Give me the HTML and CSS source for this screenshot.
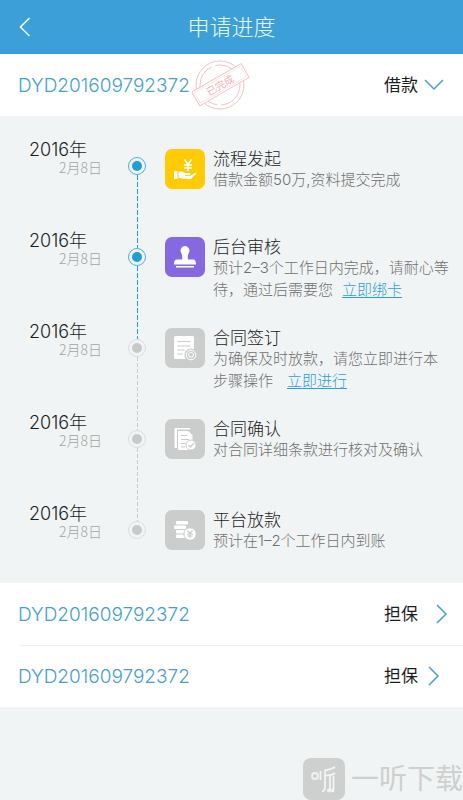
FILE: index.html
```html
<!DOCTYPE html>
<html lang="zh-CN">
<head>
<meta charset="utf-8">
<meta name="viewport" content="width=device-width, initial-scale=1">
<title>申请进度</title>
<link rel="stylesheet" href="styles.css">
</head>
<body>
<header class="topbar">
  <button class="back" type="button" aria-label="返回">
    <svg width="12" height="20" viewBox="0 0 12 20"><path d="M10.500 1 1.500 10l9 9"/></svg>
  </button>
  <h1 class="topbar-title">申请进度</h1>
</header>

<main>
  <button class="order" type="button" aria-expanded="true">
    <span class="order-no">DYD201609792372</span>
    <svg class="stamp" width="58" height="52" viewBox="0 0 58 52">
      <circle cx="28" cy="26" r="24"/>
      <circle cx="28" cy="26" r="20" stroke-dasharray="30 4 18 3"/>
      <g transform="rotate(-30 28 26)">
        <rect class="stamp-band" x="0" y="18" width="57" height="16"/>
        <rect x="2" y="20" width="53" height="12" stroke-width=".4"/>
        <text x="28" y="30" text-anchor="middle">已完成</text>
      </g>
    </svg>
    <span class="order-type">借款</span>
    <svg class="chevron" width="30" height="20" viewBox="0 0 30 20"><path d="m7 5 9 9 9-9"/></svg>
  </button>

  <ol class="timeline">
    <li class="step done">
      <div class="when"><span class="year">2016年</span><span class="day">2月8日</span></div>
      <div class="marker"><span class="dot"></span></div>
      <div class="body">
        <svg class="icon icon-yellow" width="40" height="40" viewBox="0 0 40 40">
          <path d="M9 22h3.500v8H9zM13.500 23c3-1.200 5-.5 7 1h4c1.500 0 1.500 1.800 0 2h-4.500v.8h5.500l4-2.600c1.500-.8 2.200.4 1.200 1.400L27 29c-1 .8-2 1.200-3 1.200L13.500 29z"/>
          <path class="stroke" stroke-width="1.600" d="m19.500 10.500 3.500 5 3.500-5M19 16h8M19 19h8M23 15.500V22"/>
        </svg>
        <div class="text"><h2>流程发起</h2><p>借款金额50万,资料提交完成</p></div>
      </div>
    </li>
    <li class="step done">
      <div class="when"><span class="year">2016年</span><span class="day">2月8日</span></div>
      <div class="marker"><span class="dot"></span></div>
      <div class="body">
        <svg class="icon icon-purple" width="40" height="40" viewBox="0 0 40 40">
          <path d="M20 9a4.500 4.500 0 0 1 4 6.500c-1.200 2-1.500 5-1 7h5c2.500 0 3 2 3 5H9c0-3 .5-5 3-5h5c.5-2 .2-5-1-7A4.500 4.500 0 0 1 20 9zM11 29h18v1.500H11z"/>
        </svg>
        <div class="text"><h2>后台审核</h2><p>预计2–3个工作日内完成，请耐心等待，通过后需要您<a href="#bind">立即绑卡</a></p></div>
      </div>
    </li>
    <li class="step">
      <div class="when"><span class="year">2016年</span><span class="day">2月8日</span></div>
      <div class="marker"><span class="dot"></span></div>
      <div class="body">
        <svg class="icon" width="40" height="40" viewBox="0 0 40 40">
          <rect x="9" y="8" width="20" height="23" rx="1.500"/>
          <path class="cut" d="M12.500 13.500h13M12.500 18h13M12.500 22h7M12.500 26h5"/>
          <circle class="cut solid" cx="26" cy="27" r="6"/>
          <circle class="stroke" cx="26" cy="27" r="4.800"/>
          <path class="stroke" d="m26 24 2.600 1.800-1 3.200h-3.200l-1-3.200z"/>
        </svg>
        <div class="text"><h2>合同签订</h2><p>为确保及时放款，请您立即进行本步骤操作<a class="wide" href="#sign">立即进行</a></p></div>
      </div>
    </li>
    <li class="step">
      <div class="when"><span class="year">2016年</span><span class="day">2月8日</span></div>
      <div class="marker"><span class="dot"></span></div>
      <div class="body">
        <svg class="icon" width="40" height="40" viewBox="0 0 40 40">
          <path d="M10 9h15v1.500H12V29h-1c-1 0-1.500-.5-1.500-1.500v-17z"/>
          <path d="M13 12h10l4.500 4v15H14.500c-1 0-1.500-.5-1.500-1.500z"/>
          <path class="cut" d="M16 16.500h6M16 20.500h8M16 24.500h5M16 28h4"/>
          <circle class="cut-line" cx="26" cy="26" r="5"/>
          <path class="cut" d="m23.500 26 2 2 3.500-4"/>
        </svg>
        <div class="text"><h2>合同确认</h2><p>对合同详细条款进行核对及确认</p></div>
      </div>
    </li>
    <li class="step">
      <div class="when"><span class="year">2016年</span><span class="day">2月8日</span></div>
      <div class="marker"><span class="dot"></span></div>
      <div class="body">
        <svg class="icon" width="40" height="40" viewBox="0 0 40 40">
          <rect x="11" y="11" width="12" height="3.400" rx="1"/>
          <rect x="9" y="15.500" width="12" height="3.400" rx="1"/>
          <rect x="11" y="20" width="12" height="3.400" rx="1"/>
          <rect x="11" y="24.500" width="12" height="3.400" rx="1"/>
          <circle class="cut-line" cx="25" cy="24" r="6.200"/>
          <path class="cut" d="m22.500 20.500 2.500 3 2.500-3M22 24h6M22 26h6M25 24v4"/>
        </svg>
        <div class="text"><h2>平台放款</h2><p>预计在1–2个工作日内到账</p></div>
      </div>
    </li>
  </ol>

  <button class="order" type="button">
    <span class="order-no">DYD201609792372</span>
    <span class="order-type">担保</span>
    <svg class="chevron" width="30" height="20" viewBox="0 0 30 20"><path d="m19 1 9 9-9 9"/></svg>
  </button>
  <button class="order divided" type="button">
    <span class="order-no">DYD201609792372</span>
    <span class="order-type">担保</span>
    <svg class="chevron" width="30" height="20" viewBox="0 0 30 20"><path d="m11 1 9 9-9 9"/></svg>
  </button>
</main>

<footer class="brand">
  <svg width="42" height="42" viewBox="0 0 42 42">
    <rect width="42" height="42" rx="8"/>
    <g class="brand-mark">
      <circle cx="12" cy="18" r="3"/>
      <path d="M17.500 13v9M32 9c-3 2-6 3-10 3.500v16c0 3-1 4.500-3 5M22 18c4-1.500 7 0 10-3M27 18v13.500M30.500 18v13.500"/>
      <circle cx="26" cy="32.500" r="1"/><circle cx="29.500" cy="32.500" r="1"/>
    </g>
  </svg>
  <span>一听下载</span>
</footer>
</body>
</html>
```
FILE: styles.css
```css
* { box-sizing: border-box; }

body {
  margin: 0;
  min-height: 100vh;
  display: flex;
  flex-direction: column;
  background: #f1f4f4;
  color: #1c1c1c;
  font-family: Inter, "Noto Sans CJK SC", sans-serif;
  font-weight: 300;
}

h1, h2, p, ol { margin: 0; padding: 0; font-weight: inherit; }

button {
  border: 0;
  background: none;
  font: inherit;
  color: inherit;
  cursor: pointer;
}

.topbar {
  display: grid;
  grid-template-columns: 50px 1fr 50px;
  align-items: center;
  height: 54px;
  background: #3c9fd8;
  color: #e9fbff;
}

.back { display: flex; padding: 0 0 0 19px; }
.back svg { fill: none; stroke: #e9fbff; stroke-width: 1.6; }

.topbar-title {
  font-size: 22px;
  line-height: 32px;
  text-align: center;
}

.order {
  display: flex;
  align-items: center;
  width: 100%;
  height: 62px;
  padding: 0 15px 0 18px;
  background: #fff;
  text-align: left;
}

.order-no { color: #46a0cc; font-size: 19px; }
.order-type { margin-left: auto; font-size: 17px; line-height: 20px; font-weight: 400; }

.chevron { fill: none; stroke: #46a0cc; stroke-width: 1.5; }

.stamp {
  margin-left: 2px;
  fill: none;
  stroke: #f3c3c7;
  stroke-width: 1;
}
.stamp-band { fill: #fff; }
.stamp text { fill: #eeb0b6; stroke: none; font-size: 10px; font-weight: 400; }

.divided {
  background: linear-gradient(#eee, #eee) 20px 0 / 100% 1px no-repeat #fff;
}

.timeline {
  padding: 23px 14px 0 29px;
  list-style: none;
}

.step {
  display: grid;
  grid-template-columns: 99px 18px 1fr;
  min-height: 91px;
}
.step:last-child { min-height: 80px; }

.when { display: flex; flex-direction: column; }
.year { font-size: 18px; line-height: 22px; }
.day {
  padding-left: 30px;
  color: #a3a5a5;
  font-family: "Noto Sans CJK SC", sans-serif;
  font-size: 14px;
  line-height: 12px;
}

.marker {
  display: flex;
  flex-direction: column;
  align-items: center;
  padding-top: 18px;
}

.dot {
  flex: none;
  width: 18px;
  height: 18px;
  padding: 3px;
  border: 1px solid #dcdede;
  border-radius: 50%;
  background: #c8caca content-box;
}
.done .dot { border-color: #4fb0da; background-color: #1f9fd6; }

.step:not(:last-child) .marker::after {
  content: "";
  flex: 1;
  width: 1px;
  margin-bottom: -18px;
  background: repeating-linear-gradient(#c8caca 0 4px, transparent 4px 6px);
}
.step.done:not(:last-child) .marker::after {
  background: repeating-linear-gradient(#1f9fd6 0 5px, transparent 5px 7px);
}

.body {
  display: flex;
  align-items: flex-start;
  gap: 8px;
  padding: 7px 0 0 19px;
}
.step:first-child .body { padding-top: 10px; }

.icon {
  flex: none;
  border-radius: 7px;
  background: #cbcccc;
  fill: #fff;
}
.icon-yellow { background: #ffcb05; }
.icon-purple { background: #8569e0; }
.icon .stroke { fill: none; stroke: #fff; }
.icon .cut { fill: none; stroke: #cbcccc; stroke-width: 1.2; }
.icon .cut.solid { fill: #cbcccc; }
.icon .cut-line { stroke: #cbcccc; stroke-width: 1; }

.text h2 { font-size: 17px; line-height: 20px; }
.text p { color: #707070; font-size: 15px; line-height: 22px; }
.text a { margin-left: 9px; color: #2c9fd4; text-underline-offset: 2px; }
.text .wide { margin-left: 14px; }

.brand {
  display: flex;
  align-items: center;
  justify-content: flex-end;
  gap: 6px;
  margin-top: auto;
  color: #cdd0cf;
  font-size: 28px;
  font-weight: 400;
  line-height: 42px;
}
.brand svg { fill: #cdd0cf; }
.brand .brand-mark { fill: none; stroke: #f1f4f4; stroke-width: 1.8; }
```
